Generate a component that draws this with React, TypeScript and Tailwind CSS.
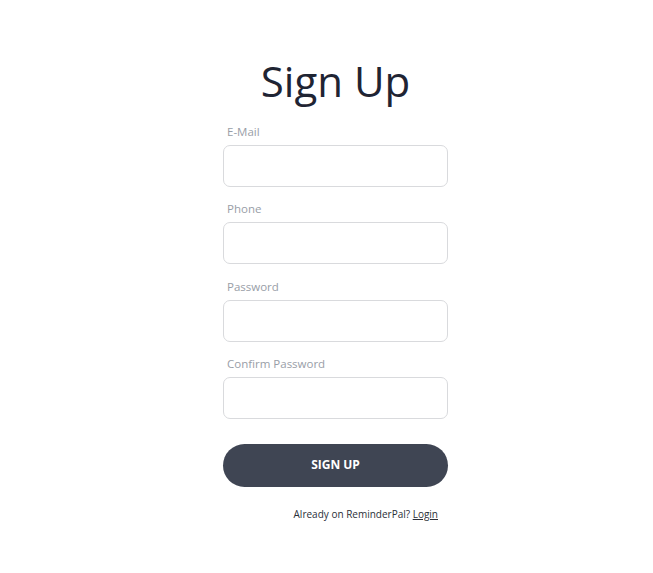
export default function App() {
  const fields = ['E-Mail', 'Phone', 'Password', 'Confirm Password'];

  return (
    <div
      className="min-h-[573px] bg-white pl-[18px] pt-[53px]"
      style={{ fontFamily: '"Open Sans", "Noto Sans", sans-serif' }}
    >
      <div className="mx-auto flex w-[225px] flex-col">
        <h1 className="whitespace-nowrap text-center text-[42px] leading-[56px] font-normal text-[#1f2433]">Sign Up</h1>

        <form className="mt-[14px] flex flex-col">
          {fields.map((label) => (
            <div key={label} className="mb-[13.4px] flex flex-col">
              <label className="mb-[4px] pl-[4px] text-[11.5px] leading-[18px] text-[#999ea7]">{label}</label>
              <input
                type={label.includes('Password') ? 'password' : 'text'}
                className="h-[42px] w-full rounded-[7px] border border-[#d9dadd] bg-white px-3 outline-none"
              />
            </div>
          ))}

          <button
            type="button"
            className="mt-[11px] h-[43px] w-full rounded-full bg-[#3f4553] text-[12px] font-bold text-white"
          >
            SIGN UP
          </button>
        </form>

        <p className="mt-[20px] pr-[10px] text-right text-[10px] leading-[14px] text-[#2b2f38]">
          Already on ReminderPal? <a href="#" className="underline">Login</a>
        </p>
      </div>
    </div>
  );
}
